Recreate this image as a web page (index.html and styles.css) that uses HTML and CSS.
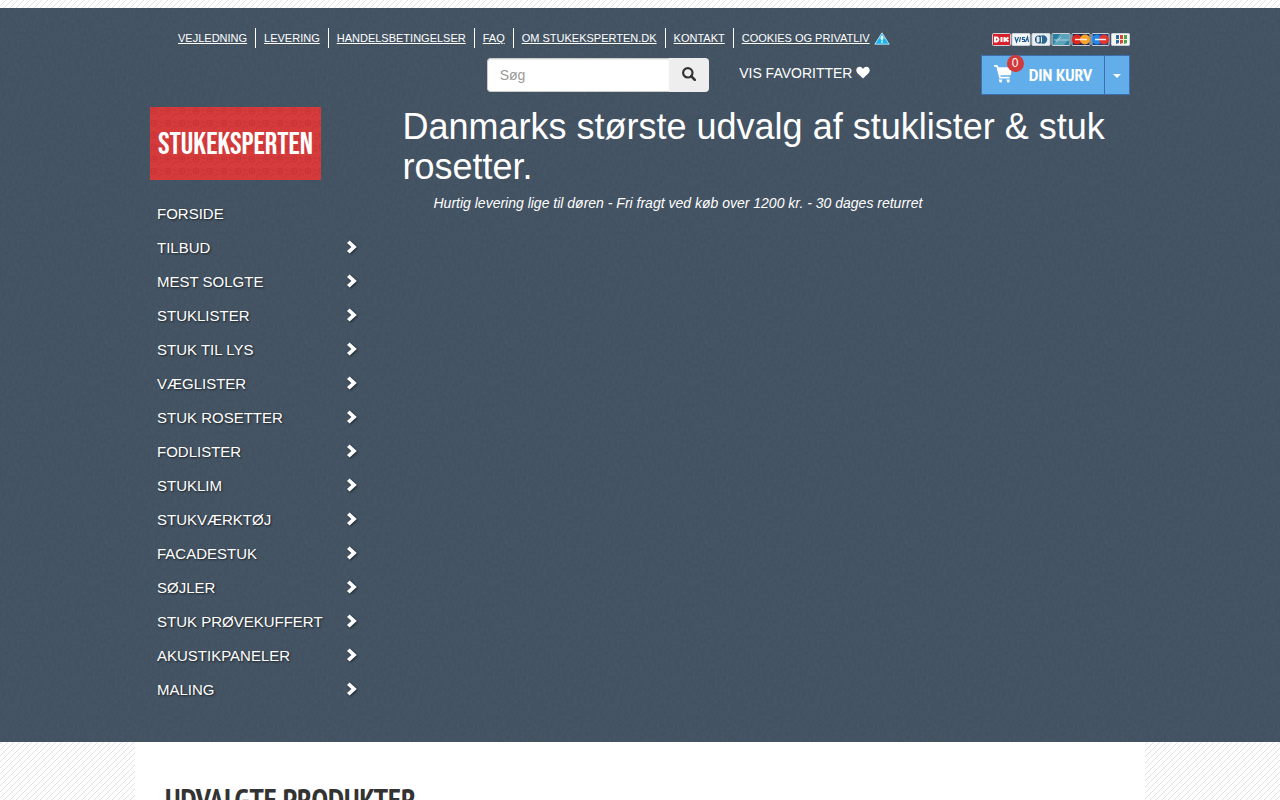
FILE: index.html
```html
<!DOCTYPE html>
<html lang="da">
<head>
    <meta charset="utf-8">
    <meta name="viewport" content="width=device-width, initial-scale=1">
    <title>Stukeksperten</title>
    <link rel="stylesheet" href="styles.css">
</head>
<body>
    <svg class="sprite" aria-hidden="true">
        <symbol id="chevron" viewBox="0 0 12 14">
            <path d="M1 3 3.600 .4 10.800 7 3.600 13.600 1 11 5.400 7z"/>
        </symbol>
    </svg>

    <header class="header">
        <div class="container">
            <div class="topbar">
                <ul class="toplinks">
                    <li><a href="#">VEJLEDNING</a></li>
                    <li><a href="#">LEVERING</a></li>
                    <li><a href="#">HANDELSBETINGELSER</a></li>
                    <li><a href="#">FAQ</a></li>
                    <li><a href="#">OM STUKEKSPERTEN.DK</a></li>
                    <li><a href="#">KONTAKT</a></li>
                    <li>
                        <a href="#">COOKIES OG PRIVATLIV</a>
                        <svg class="cookie-icon" viewBox="0 0 16 13" aria-hidden="true">
                            <path d="M8 .8 15.200 12.200H.8z" fill="#18b4f0" stroke="#d8eef5" stroke-width=".8" stroke-linejoin="round"/>
                            <path d="M8 2 11 7H5z" fill="#6fd0f3"/>
                            <path d="M7.200 4h1.600v4.400H7.200zM7.200 9.200h1.600v1.600H7.200z" fill="#fff"/>
                        </svg>
                    </li>
                </ul>
                <svg class="cards" viewBox="0 0 138 13" role="img" aria-label="Betalingskort">
                    <g stroke="#c9d0d5" stroke-width="1">
                        <rect x=".5" y=".5" width="18" height="12" rx="1" fill="#d92028"/>
                        <rect x="20" y=".5" width="18" height="12" rx="1" fill="#f4f7f9"/>
                        <rect x="40" y=".5" width="18" height="12" rx="1" fill="#e9eff3"/>
                        <rect x="60" y=".5" width="18" height="12" rx="1" fill="#2c7f9f"/>
                        <rect x="80" y=".5" width="18" height="12" rx="1" fill="#252a52"/>
                        <rect x="100" y=".5" width="17" height="12" rx="1" fill="#1c3f80"/>
                        <rect x="119.500" y=".5" width="18" height="12" rx="1" fill="#f6f6f2"/>
                    </g>
                    <path d="M3 4.500v4h2q3-2 0-4zM9.500 4v5M12.500 4v5M16.500 4.500l-3 2 3 2" fill="none" stroke="#fff" stroke-width="2"/>
                    <path d="M23 4l1.500 5L26.500 4M28.500 4l-1 5M33 4.500h-2.500v2h2v2h-2.500M33.500 9l2-5 1 5" fill="none" stroke="#1f5b8c" stroke-width="1.200"/>
                    <circle cx="47" cy="6.500" r="4" fill="#173f67"/>
                    <circle cx="51" cy="6.500" r="4.200" fill="#2c6590"/>
                    <path d="M45 4v5h2V4zM49.500 3.500v6" fill="#dce9f1" stroke="#dce9f1"/>
                    <path d="M61 12 68 1h9v5l-5 6z" fill="#5ba3ba"/>
                    <path d="M62 7h15M64 9l5-5" fill="none" stroke="#a9d2dd"/>
                    <circle cx="85" cy="6.500" r="5" fill="#dc2720"/>
                    <circle cx="93" cy="6.500" r="5" fill="#f4a329"/>
                    <path d="M83 6.500h12" stroke="#fbe5dc" stroke-width="1.500"/>
                    <circle cx="105" cy="6.500" r="5" fill="#2387e9"/>
                    <circle cx="112" cy="6.500" r="5" fill="#e2352d"/>
                    <path d="M103 6.500h11" stroke="#e6edf8" stroke-width="1.500"/>
                    <path d="M124 2h3v8l-3 1z" fill="#286ba6"/>
                    <path d="M128 2h3v8l-3 1z" fill="#d74637"/>
                    <path d="M132 2h3v8l-3 1z" fill="#4ba34a"/>
                    <path d="M123 6.500h12" stroke="#f1e9ce"/>
                </svg>
            </div>

            <div class="tools">
                <form class="search" role="search">
                    <input type="search" placeholder="Søg" aria-label="Søg">
                    <button type="button" aria-label="Søg">
                        <svg viewBox="0 0 14 14" aria-hidden="true">
                            <circle cx="5.800" cy="5.800" r="4.700" fill="none" stroke="#333" stroke-width="2.200"/>
                            <path d="M9.200 9.200l3.600 3.600" stroke="#333" stroke-width="2.600" stroke-linecap="round"/>
                        </svg>
                    </button>
                </form>
                <a class="favorites" href="#">VIS FAVORITTER
                    <svg viewBox="0 0 14 13" aria-hidden="true">
                        <path d="M7 12.500 1.500 7.300C-1 4.500.6.7 3.700.7 5.300.7 6.500 1.700 7 3 7.500 1.700 8.700.7 10.300.7c3.100 0 4.700 3.800 2.200 6.600z" fill="#fff"/>
                    </svg>
                </a>
                <div class="cart">
                    <button class="cart-main" type="button">
                        <span class="cart-icon">
                            <svg viewBox="0 0 18 18" aria-hidden="true">
                                <path d="M.8 0h2.600l1 2.200H18l-1.200 8H6.400l.4 1.600H15a.9.9 0 0 1 0 1.800H5.300L2.400 1.800H.8A.9.9 0 0 1 .8 0z" fill="#fff"/>
                                <path d="M4.600 14.500h3.800l-.8 3H5.800zM12.200 14.500H16l-.8 3h-1.800z" fill="#fff"/>
                            </svg>
                            <span class="badge">0</span>
                        </span>
                        <span>DIN KURV</span>
                    </button>
                    <button class="cart-toggle" type="button" aria-label="Vis kurv"><span class="caret"></span></button>
                </div>
            </div>

            <div class="main-row">
                <div class="sidebar">
                    <a class="logo" href="#">STUKEKSPERTEN</a>
                    <nav>
                        <ul class="menu">
                            <li><a href="#">FORSIDE</a></li>
                            <li><a href="#">TILBUD <svg><use href="#chevron"/></svg></a></li>
                            <li><a href="#">MEST SOLGTE <svg><use href="#chevron"/></svg></a></li>
                            <li><a href="#">STUKLISTER <svg><use href="#chevron"/></svg></a></li>
                            <li><a href="#">STUK TIL LYS <svg><use href="#chevron"/></svg></a></li>
                            <li><a href="#">VÆGLISTER <svg><use href="#chevron"/></svg></a></li>
                            <li><a href="#">STUK ROSETTER <svg><use href="#chevron"/></svg></a></li>
                            <li><a href="#">FODLISTER <svg><use href="#chevron"/></svg></a></li>
                            <li><a href="#">STUKLIM <svg><use href="#chevron"/></svg></a></li>
                            <li><a href="#">STUKVÆRKTØJ <svg><use href="#chevron"/></svg></a></li>
                            <li><a href="#">FACADESTUK <svg><use href="#chevron"/></svg></a></li>
                            <li><a href="#">SØJLER <svg><use href="#chevron"/></svg></a></li>
                            <li><a href="#">STUK PRØVEKUFFERT <svg><use href="#chevron"/></svg></a></li>
                            <li><a href="#">AKUSTIKPANELER <svg><use href="#chevron"/></svg></a></li>
                            <li><a href="#">MALING <svg><use href="#chevron"/></svg></a></li>
                        </ul>
                    </nav>
                </div>
                <div class="intro">
                    <h1>Danmarks største udvalg af stuklister &amp; stuk rosetter.</h1>
                    <p>Hurtig levering lige til døren - Fri fragt ved køb over 1200 kr. - 30 dages returret</p>
                </div>
            </div>
        </div>
    </header>

    <main class="container products">
        <h2>UDVALGTE PRODUKTER</h2>
    </main>
</body>
</html>
```

FILE: styles.css
```css
* {
    box-sizing: border-box;
}

body {
    margin: 0;
    padding-top: 8px;
    font: 14px/20px "Liberation Sans", Arial, sans-serif;
    color: #333;
    background: #fff url("data:image/svg+xml,%3Csvg xmlns='http://www.w3.org/2000/svg' width='6' height='6' shape-rendering='crispEdges'%3E%3Cpath d='M5 0h1v1H5zM4 1h1v1H4zM3 2h1v1H3zM2 3h1v1H2zM1 4h1v1H1zM0 5h1v1H0z' fill='%23e2e2e2'/%3E%3C/svg%3E");
}

ul {
    list-style: none;
    margin: 0;
    padding: 0;
}

a {
    color: #fff;
    text-decoration: none;
}

button {
    font: inherit;
    cursor: pointer;
}

.sprite {
    display: none;
}

.container {
    max-width: 1010px;
    margin: 0 auto;
    padding: 0 15px;
}

.header {
    padding: 20px 0 35px;
    color: #fff;
    background: #465666 url("data:image/svg+xml,%3Csvg xmlns='http://www.w3.org/2000/svg' width='200' height='200'%3E%3Cfilter id='n' x='0' y='0' width='100%25' height='100%25' color-interpolation-filters='sRGB'%3E%3CfeTurbulence type='fractalNoise' baseFrequency='.45 .25' numOctaves='2' stitchTiles='stitch'/%3E%3CfeColorMatrix values='0 0 0 0 .1 0 0 0 0 .16 0 0 0 0 .2 1 0 0 0 -.2'/%3E%3C/filter%3E%3Crect width='200' height='200' filter='url(%23n)' opacity='.22'/%3E%3C/svg%3E");
}

/* Top bar */
.topbar {
    display: flex;
    justify-content: space-between;
    align-items: center;
    padding-left: 20px;
}

.toplinks {
    display: flex;
    flex-wrap: wrap;
    font-size: 11px;
}

.toplinks li {
    display: flex;
    align-items: center;
    gap: 4px;
    padding: 0 8px;
}

.toplinks li + li {
    border-left: 1px solid #fff;
}

.toplinks a {
    text-decoration: underline;
}

.cookie-icon {
    width: 16px;
    height: 13px;
}

.cards {
    width: 138px;
    height: 13px;
    margin-top: 3px;
}

/* Search, favourites and cart */
.tools {
    display: grid;
    grid-template-columns: repeat(12, 1fr);
    align-items: center;
    margin: 7px -15px 12px;
}

.search {
    grid-column: 5 / span 3;
    display: flex;
    height: 34px;
    margin: 0 15px;
}

.search input {
    flex: 1;
    min-width: 0;
    padding: 6px 12px;
    border: 1px solid #ccc;
    border-right: 0;
    border-radius: 4px 0 0 4px;
    background: #fff;
    font: inherit;
    box-shadow: inset 0 1px 1px rgba(0, 0, 0, .075);
    appearance: none;
}

.search input::placeholder {
    color: #999;
}

.search button {
    display: flex;
    align-items: center;
    justify-content: center;
    width: 40px;
    padding: 0 0 2px;
    border: 0;
    border-radius: 0 4px 4px 0;
    background: #eee;
}

.search svg {
    width: 14px;
    height: 14px;
}

.favorites {
    grid-column: 8 / span 2;
    padding: 0 0 4px 15px;
    white-space: nowrap;
}

.favorites svg {
    width: 14px;
    height: 13px;
    vertical-align: -1px;
}

.cart {
    grid-column: 10 / span 3;
    justify-self: end;
    display: flex;
    height: 40px;
    margin-right: 15px;
}

.cart button {
    border: 1px solid #3d6fb0;
    background: #62aeea;
    color: #fff;
}

.cart .cart-main {
    display: flex;
    align-items: center;
    gap: 17px;
    padding: 0 12px;
    font: bold 18px/20px "PT Sans Narrow", "Liberation Sans Narrow", "Roboto Condensed", "Liberation Sans", sans-serif;
}

.cart .cart-toggle {
    width: 26px;
    margin-left: -1px;
    padding: 0;
}

.cart-icon {
    position: relative;
    height: 20px;
}

.cart-icon svg {
    display: block;
    width: 18px;
    height: 18px;
}

.badge {
    position: absolute;
    top: -10px;
    left: 13px;
    width: 17px;
    height: 17px;
    border-radius: 50%;
    background: #d13a3a;
    font: 12px/17px "Liberation Sans", Arial, sans-serif;
    text-align: center;
}

.caret {
    display: inline-block;
    border: 4px solid transparent;
    border-top-color: #fff;
    border-bottom: 0;
    vertical-align: middle;
}

/* Sidebar and intro */
.main-row {
    display: grid;
    grid-template-columns: 1fr 3fr;
    margin: 0 -15px;
}

.sidebar,
.intro {
    padding: 0 15px;
}

.logo {
    display: flex;
    align-items: center;
    justify-content: center;
    width: 171px;
    height: 73px;
    margin-bottom: 17px;
    padding-top: 2px;
    background: #d53b3b url("data:image/svg+xml,%3Csvg xmlns='http://www.w3.org/2000/svg' width='14' height='12' fill='none' stroke='%23b92c2f' stroke-opacity='.55'%3E%3Ccircle cx='4' cy='4' r='3'/%3E%3Ccircle cx='4' cy='4' r='1'/%3E%3Cpath d='M8 10q3-5 6-2M9 2q2 3 4 1'/%3E%3C/svg%3E");
    font: 31px/34px "Bebas Neue", "PT Sans Narrow", "Liberation Sans Narrow", "Roboto Condensed", "Liberation Sans", sans-serif;
}

.menu a {
    display: flex;
    justify-content: space-between;
    align-items: center;
    height: 34px;
    padding: 0 15px 0 7px;
    font-size: 15px;
    text-shadow: 1px 1px 2px rgba(0, 0, 0, .6);
}

.menu svg {
    width: 12px;
    height: 14px;
    margin-bottom: 2px;
    fill: #fff;
    filter: drop-shadow(1px 1px 1px rgba(0, 0, 0, .5));
}

h1 {
    margin: 0;
    font-size: 36px;
    font-weight: 500;
    line-height: 40px;
}

.intro p {
    margin: 6px 31px;
    font-style: italic;
}

/* Products */
.products {
    padding: 38px 30px;
    background: #fff;
}

h2 {
    margin: 0;
    font: bold 30px/40px "PT Sans Narrow", "Liberation Sans Narrow", "Roboto Condensed", "Liberation Sans", sans-serif;
}
```
